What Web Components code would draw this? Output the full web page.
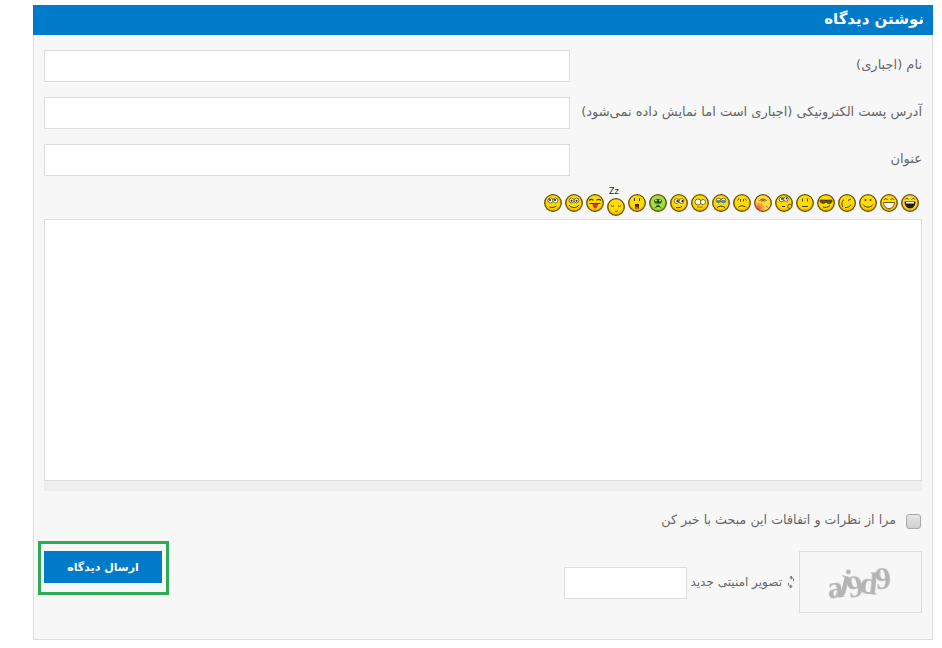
<!DOCTYPE html>
<html lang="fa" dir="rtl">
<head>
<meta charset="utf-8">
<title>نوشتن دیدگاه</title>
<style>
   html, body { margin: 0; background: #fff; }
   body { font: 13px "DejaVu Sans", sans-serif; color: #666; padding: 5px 9px 0 33px; }
</style>
</head>
<body>
<comment-form title-text="نوشتن دیدگاه">
   <form-row label="نام (اجباری)"></form-row>
   <form-row label="آدرس پست الکترونیکی (اجباری است اما نمایش داده نمی‌شود)"></form-row>
   <form-row label="عنوان"></form-row>
   <smiley-bar faces="laugh grin smile wink shades neutral think blush sad cry goggle roll sick gasp sleep tongue happy dizzy"></smiley-bar>
   <text-box></text-box>
   <notify-check label="مرا از نظرات و اتفاقات این مبحث با خبر کن"></notify-check>
   <captcha-row code="aj9d9" refresh="تصویر امنیتی جدید"></captcha-row>
   <send-button label="ارسال دیدگاه"></send-button>
</comment-form>

<script>
class CommentForm extends HTMLElement {
   constructor() {
      super();
      this.attachShadow({ mode: "open" }).innerHTML = `
      <style>
         :host { display: block; width: 900px; box-sizing: border-box; }
         h2 {
            margin: 0; height: 30px; padding: 0 9px; box-sizing: border-box;
            background: #007bc9; color: #fff;
            font: bold 15px/29px "DejaVu Sans", sans-serif;
         }
         #body {
            height: 605px; box-sizing: border-box;
            background: #f7f7f7; border: 1px solid #ddd; border-top: 0;
            padding: 15px 10px 0;
         }
      </style>
      <h2>${this.getAttribute("title-text")}</h2>
      <div id="body"><slot></slot></div>`;
   }
}

class FormRow extends HTMLElement {
   constructor() {
      super();
      this.attachShadow({ mode: "open" }).innerHTML = `
      <style>
         :host { display: flex; height: 32px; margin-bottom: 15px; }
         label { flex: 1; white-space: nowrap; line-height: 29px; font-size: 13px; color: #666; }
         .field { width: 526px; height: 32px; box-sizing: border-box; background: #fff; border: 1px solid #ddd; }
      </style>
      <label>${this.getAttribute("label")}</label>
      <div class="field"></div>`;
   }
}

const FACE_PARTS = {
   laugh: `<path d="M3.500 7.500h11c0 4-2.200 7-5.500 7s-5.500-3-5.500-7z" fill="#2b1c00"/><path d="M5 8h8v1.500H5z" fill="#fff"/><path d="M4 5.500c1-1.500 2.500-1.500 3.500 0M10.500 5.500c1-1.500 2.500-1.500 3.500 0" fill="none" stroke="#4a3600" stroke-width="1"/>`,
   grin: `<path d="M3.500 8.500h11c0 3.500-2.500 6-5.500 6s-5.500-2.500-5.500-6z" fill="#fff" stroke="#4a3600" stroke-width=".8"/><path d="M4 5.800c1-1.500 2.500-1.500 3.500 0M10.500 5.800c1-1.500 2.500-1.500 3.500 0" fill="none" stroke="#4a3600" stroke-width="1"/>`,
   smile: `<circle cx="6.500" cy="6" r="1" fill="#4a3600"/><circle cx="11.500" cy="6" r="1" fill="#4a3600"/><path d="M4 10.500c2 3.500 8 3.500 10 0" fill="none" stroke="#4a3600"/>`,
   wink: `<path d="M10 6.500l3-1.500" stroke="#4a3600" fill="none"/><path d="M5 13c-2-3-1-6 1-7.500M7 13.500c2 .3 5-.5 6-3" fill="none" stroke="#4a3600"/>`,
   shades: `<path d="M3 6h5.500v2.500c-2 1.500-4.500 1-5.500-1zM9.500 6H15v1.500c-1 2.500-3.500 2.800-5.500 1z" fill="#6b5210" stroke="#3d2c00" stroke-width=".7"/><path d="M8 6.500h2" stroke="#3d2c00"/><path d="M6 13c2 .8 5 .5 7-1.500" fill="none" stroke="#4a3600"/>`,
   neutral: `<path d="M6.500 4.500v3M11.500 4.500v3" stroke="#4a3600"/><path d="M6 12.500h6" stroke="#4a3600"/>`,
   think: `<circle cx="6.500" cy="5.500" r="2.300" fill="#fff" stroke="#4a3600" stroke-width=".7"/><circle cx="11" cy="5" r="2.300" fill="#fff" stroke="#4a3600" stroke-width=".7"/><circle cx="7" cy="5" r=".9" fill="#222"/><circle cx="11.500" cy="4.500" r=".9" fill="#222"/><circle cx="14.800" cy="12.300" r="2.100" fill="#f6cf14" stroke="#4a3600" stroke-width=".8"/><path d="M7 12.500h3" stroke="#4a3600"/>`,
   blush: `<path d="M5.500 7c1-2.500 6-2.500 7 0" fill="none" stroke="#7d4a20"/><path d="M7 7.500c.6-1.200 3.400-1.200 4 0" fill="none" stroke="#7d4a20"/><path d="M12.500 12.500l1 .5" stroke="#7d4a20"/>`,
   sad: `<path d="M6 4.500l-1.500 2M12 4.500l1.500 2M7.500 5v2.500M10.500 5v2.500" stroke="#4a3600" fill="none" stroke-width=".9"/><path d="M5.500 13c2-1.600 5-1.600 7 0" fill="none" stroke="#4a3600"/>`,
   cry: `<circle cx="6.500" cy="6.500" r="2.300" fill="#fff" stroke="#4a3600" stroke-width=".7"/><circle cx="11.500" cy="6.500" r="2.300" fill="#fff" stroke="#4a3600" stroke-width=".7"/><path d="M5 6h3v3H5zM10 6h3v3h-3z" fill="#4d8fa8"/><path d="M5 13.500c2.500-1.800 5.500-1.800 8 0" fill="none" stroke="#4a3600"/>`,
   goggle: `<circle cx="7" cy="8" r="3" fill="#fff" stroke="#4a3600" stroke-width=".7"/><circle cx="12" cy="8" r="2.500" fill="#fff" stroke="#4a3600" stroke-width=".7"/><path d="M6 13h6" stroke="#4a3600" opacity=".6"/>`,
   roll: `<circle cx="6.500" cy="7" r="2.400" fill="#fff" stroke="#4a3600" stroke-width=".7"/><circle cx="11.500" cy="7" r="2.400" fill="#fff" stroke="#4a3600" stroke-width=".7"/><circle cx="7.300" cy="7" r="1" fill="#222"/><circle cx="12.300" cy="7" r="1" fill="#222"/><path d="M6 13.500c2 .5 4 0 6-1" fill="none" stroke="#4a3600"/>`,
   sick: `<path d="M5 6.500c1-2 7-2 8 0l-1 3H6z" fill="#1f4f12"/><circle cx="7" cy="6.500" r="1" fill="#cfe8a8"/><circle cx="11" cy="6.500" r="1" fill="#cfe8a8"/><path d="M6.500 14l2-3h1l2 3M8 12.500h2" fill="none" stroke="#1f4f12"/>`,
   gasp: `<path d="M6.500 4v3M11.500 4v3" stroke="#4a3600"/><path d="M7 10h4v4.500H7z" fill="#4a2200"/><path d="M7.500 12.500h3v2h-3z" fill="#d8482c"/>`,
   sleep: `<path d="M4 7.500c1 1 2 1 3 0M11 7.500c1 1 2 1 3 0" fill="none" stroke="#4a3600" stroke-width=".9"/><path d="M8 13c1 .8 2 .6 3-.6" fill="none" stroke="#4a3600"/>`,
   tongue: `<path d="M3 6.500c1.500-1.500 3.500-1.500 4.500 0M10.500 6.500c1-1.500 3-1.500 4.500 0" fill="none" stroke="#4a3600" stroke-width="1.100"/><path d="M3.500 9.500h11" stroke="#4a3600"/><path d="M6.500 10h5.500c0 2.500-1.500 4.500-2.800 4.500S6.500 12.500 6.500 10z" fill="#d9304a"/>`,
   happy: `<circle cx="6.500" cy="6.500" r="2.400" fill="#fff" stroke="#4a3600" stroke-width=".7"/><circle cx="11.500" cy="6.500" r="2.400" fill="#fff" stroke="#4a3600" stroke-width=".7"/><circle cx="6.500" cy="6.800" r="1" fill="#222"/><circle cx="11.500" cy="6.800" r="1" fill="#222"/><path d="M4 11c2.500 3.500 7.500 3.500 10 0" fill="none" stroke="#4a3600"/>`,
   dizzy: `<circle cx="6.500" cy="6.500" r="2.500" fill="#fff" stroke="#4a3600" stroke-width=".7"/><circle cx="11.500" cy="6.500" r="2.500" fill="#fff" stroke="#4a3600" stroke-width=".7"/><circle cx="6" cy="6" r="1" fill="#222"/><circle cx="11" cy="6" r="1" fill="#222"/><path d="M5.500 13c2 .8 5 .5 7-1" fill="none" stroke="#4a3600"/>`,
};

// [centre colour, rim colour, gradient centre x, y]
const FACE_FILLS = {
   sick: ["#a6dc3c", "#4f9a18", "50%", "45%"],
   blush: ["#f2504e", "#ffd83a", "25%", "80%"],
   laugh: ["#ffd92e", "#b88a00", "50%", "45%"],
};

class SmileyFace extends HTMLElement {
   constructor() {
      super();
      const name = this.getAttribute("name");
      const [light, dark, cx, cy] = FACE_FILLS[name] || ["#ffdc00", "#cf9800", "50%", "42%"];
      const sleeping = name == "sleep";
      this.attachShadow({ mode: "open" }).innerHTML = `
      <style>
         :host { display: block; width: 18px; height: 18px; position: relative; }
         :host([name="sleep"]) { top: 4px; }
         svg { display: block; }
         span {
            position: absolute; top: -11px; left: 2px; font: 8px/9px "DejaVu Sans", sans-serif;
            color: #222; direction: ltr; white-space: nowrap;
         }
      </style>
      ${sleeping ? "<span>Zz</span>" : ""}
      <svg width="18" height="18" viewBox="0 0 18 18">
         <defs><radialGradient id="g" cx="${cx}" cy="${cy}" r="60%">
            <stop offset="0" stop-color="${light}"/><stop offset=".65" stop-color="${name == "blush" ? dark : light}"/><stop offset="1" stop-color="${dark}"/>
         </radialGradient></defs>
         <circle cx="9" cy="9" r="8.300" fill="url(#g)" stroke="#6a5006" stroke-width="1.300"/>
         ${FACE_PARTS[name] || ""}
      </svg>`;
   }
}

class SmileyBar extends HTMLElement {
   constructor() {
      super();
      const faces = this.getAttribute("faces").split(" ");
      this.attachShadow({ mode: "open" }).innerHTML = `
      <style>
         :host { display: flex; gap: 3px; height: 18px; padding: 3px 3px 7px 0; }
      </style>
      ${faces.map((f) => `<smiley-face name="${f}"></smiley-face>`).join("")}`;
   }
}

class TextBox extends HTMLElement {
   constructor() {
      super();
      this.attachShadow({ mode: "open" }).innerHTML = `
      <style>
         :host { display: block; height: 272px; background: #eee; margin-bottom: 22px; }
         div { height: 262px; box-sizing: border-box; background: #fff; border: 1px solid #ddd; }
      </style>
      <div></div>`;
   }
}

class NotifyCheck extends HTMLElement {
   constructor() {
      super();
      this.attachShadow({ mode: "open" }).innerHTML = `
      <style>
         :host { display: flex; align-items: center; gap: 10px; height: 16px; padding-right: 1px; margin-bottom: 22px; color: #666; font-size: 12.700px; white-space: nowrap; }
         i {
            width: 15px; height: 15px; box-sizing: border-box; border: 1px solid #a9a9a9; border-radius: 3px;
            background: linear-gradient(#e6e6e6, #cfcfcf);
         }
         span { margin-bottom: 3px; }
      </style>
      <i></i><span>${this.getAttribute("label")}</span>`;
   }
}

class CaptchaRow extends HTMLElement {
   constructor() {
      super();
      // each captcha letter gets its own tilt and offset, like the generated image
      const tilt = [[-8, 5], [14, -2], [-12, 4], [6, 1], [-6, -4]];
      const letters = [...this.getAttribute("code")].map((c, i) =>
         `<b style="transform: translateY(${tilt[i][1]}px) rotate(${tilt[i][0]}deg)">${c}</b>`).join("");
      this.attachShadow({ mode: "open" }).innerHTML = `
      <style>
         :host { display: flex; align-items: center; height: 62px; font-size: 12px; color: #666; white-space: nowrap; }
         .pic {
            width: 123px; height: 62px; box-sizing: border-box; border: 1px solid #ddd;
            display: flex; align-items: center; justify-content: center; direction: ltr;
            font: 32px/1 "Liberation Serif", serif; color: #b4b4b4;
         }
         .pic b { display: block; font-weight: bold; margin-left: -3px; filter: blur(.5px); }
         .reload { display: flex; align-items: center; gap: 5px; margin: 0 4px 0 3px; }
         .field { width: 123px; height: 32px; margin-top: 2px; box-sizing: border-box; background: #fff; border: 1px solid #ddd; }
      </style>
      <div class="pic">${letters}</div>
      <div class="reload">
         <svg width="8" height="12" viewBox="0 0 8 12"><path d="M6.500 5V3c0-1-1-1.500-2-1.500M4.500 0v3L2.800 1.500zM1.500 7v2c0 1 1 1.500 2 1.500M3.500 12V9l1.700 1.500z" fill="none" stroke="#777"/></svg>
         <span>${this.getAttribute("refresh")}</span>
      </div>
      <div class="field"></div>`;
   }
}

class SendButton extends HTMLElement {
   constructor() {
      super();
      this.attachShadow({ mode: "open" }).innerHTML = `
      <style>
         :host { display: block; position: relative; width: 118px; height: 32px; margin: -62px 760px 0 0; background: #007bc9; }
         button {
            display: block; width: 100%; height: 100%; padding: 0; border: 0; background: none; color: #fff;
            font: bold 11px "DejaVu Sans", sans-serif;
         }
         /* green highlight lies over the form */
         :host::after {
            content: ""; position: absolute; left: -6px; right: -7px; top: -10px; bottom: -12px;
            border: 3px solid #2faa54;
         }
      </style>
      <button>${this.getAttribute("label")}</button>`;
   }
}

customElements.define("comment-form", CommentForm);
customElements.define("form-row", FormRow);
customElements.define("smiley-face", SmileyFace);
customElements.define("smiley-bar", SmileyBar);
customElements.define("text-box", TextBox);
customElements.define("notify-check", NotifyCheck);
customElements.define("captcha-row", CaptchaRow);
customElements.define("send-button", SendButton);
</script>
</body>
</html>
